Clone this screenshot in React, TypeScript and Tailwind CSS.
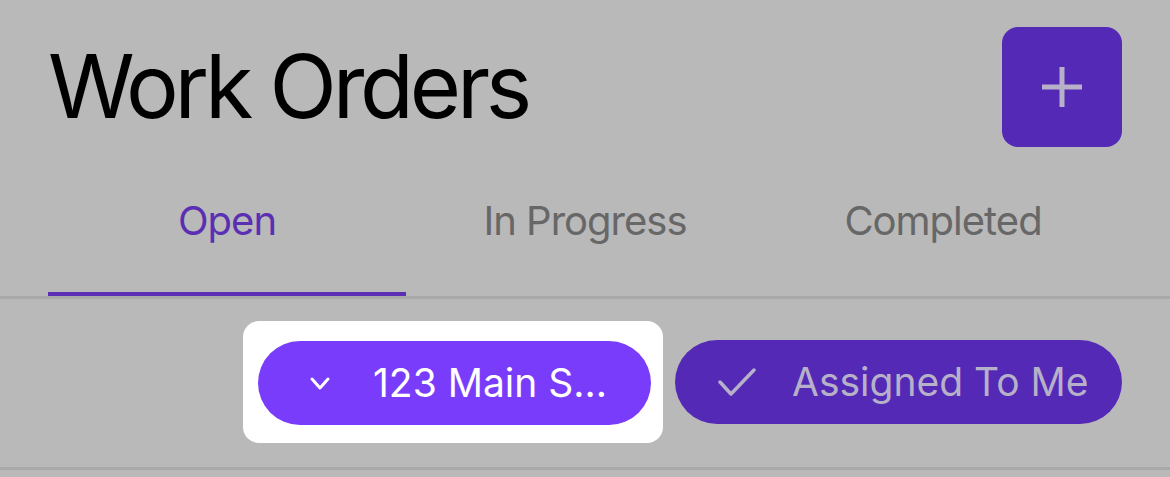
import React from 'react';

const tabs = ['Open', 'In Progress', 'Completed'];

export default function App() {
  const active = 0;

  return (
    <div className="w-[1170px] h-[477px] overflow-hidden bg-[#b9b9b9] font-['Inter','Liberation_Sans',sans-serif]">
      {/* Header */}
      <div className="flex items-start justify-between pl-[48px] pr-[48px] pt-[27px]">
        <h1 className="mt-[15px] text-[88px] leading-[88px] text-black tracking-[-4.2px]">Work Orders</h1>
        <button className="w-[120px] h-[120px] rounded-[16px] bg-[#5429b6] flex items-center justify-center">
          <svg width="44" height="44" viewBox="0 0 44 44">
            <path d="M22 2v40M2 22h40" stroke="#b7b0c9" strokeWidth="5" />
          </svg>
        </button>
      </div>

      {/* Tabs */}
      <div className="border-b-[3px] border-[#a9a9a9]">
        <div className="flex mx-[48px] mt-[54px]">
          {tabs.map((t, i) => (
            <div
              key={t}
              className={`flex-1 text-center text-[40px] leading-[40px] tracking-[-1px] pb-[51px] border-b-4 ${
                i === active ? 'text-[#5a2fb3] border-[#5a2fb3]' : 'text-[#676767] border-transparent'
              }`}
            >
              {t}
            </div>
          ))}
        </div>
      </div>

      {/* Filters */}
      <div className="flex justify-end items-center gap-[12px] pr-[48px] pt-[22px] pb-[24px] border-b-[3px] border-[#a9a9a9]">
        <div className="bg-white rounded-[16px] pl-[15px] pr-[12px] pt-[20px] pb-[18px]">
          <div className="h-[84px] w-[393px] rounded-full bg-[#7a3cfb] flex items-center pl-[52px] gap-[43px] text-white text-[39px] whitespace-nowrap overflow-hidden">
            <svg width="20" height="13" viewBox="0 0 20 13" className="shrink-0">
              <path d="M2 2l8 9 8-9" fill="none" stroke="white" strokeWidth="3" strokeLinecap="round" strokeLinejoin="round" />
            </svg>
            <span>123 Main S...</span>
          </div>
        </div>
        <div className="h-[84px] w-[447px] rounded-full bg-[#5429b6] flex items-center pl-[43px] gap-[36px] text-[#b7b0c9] text-[39px] whitespace-nowrap">
          <svg width="38" height="28" viewBox="0 0 38 28" className="shrink-0">
            <path d="M2 14l11 12L36 2" fill="none" stroke="#b7b0c9" strokeWidth="3.5" strokeLinecap="round" strokeLinejoin="round" />
          </svg>
          <span>Assigned To Me</span>
        </div>
      </div>
    </div>
  );
}
